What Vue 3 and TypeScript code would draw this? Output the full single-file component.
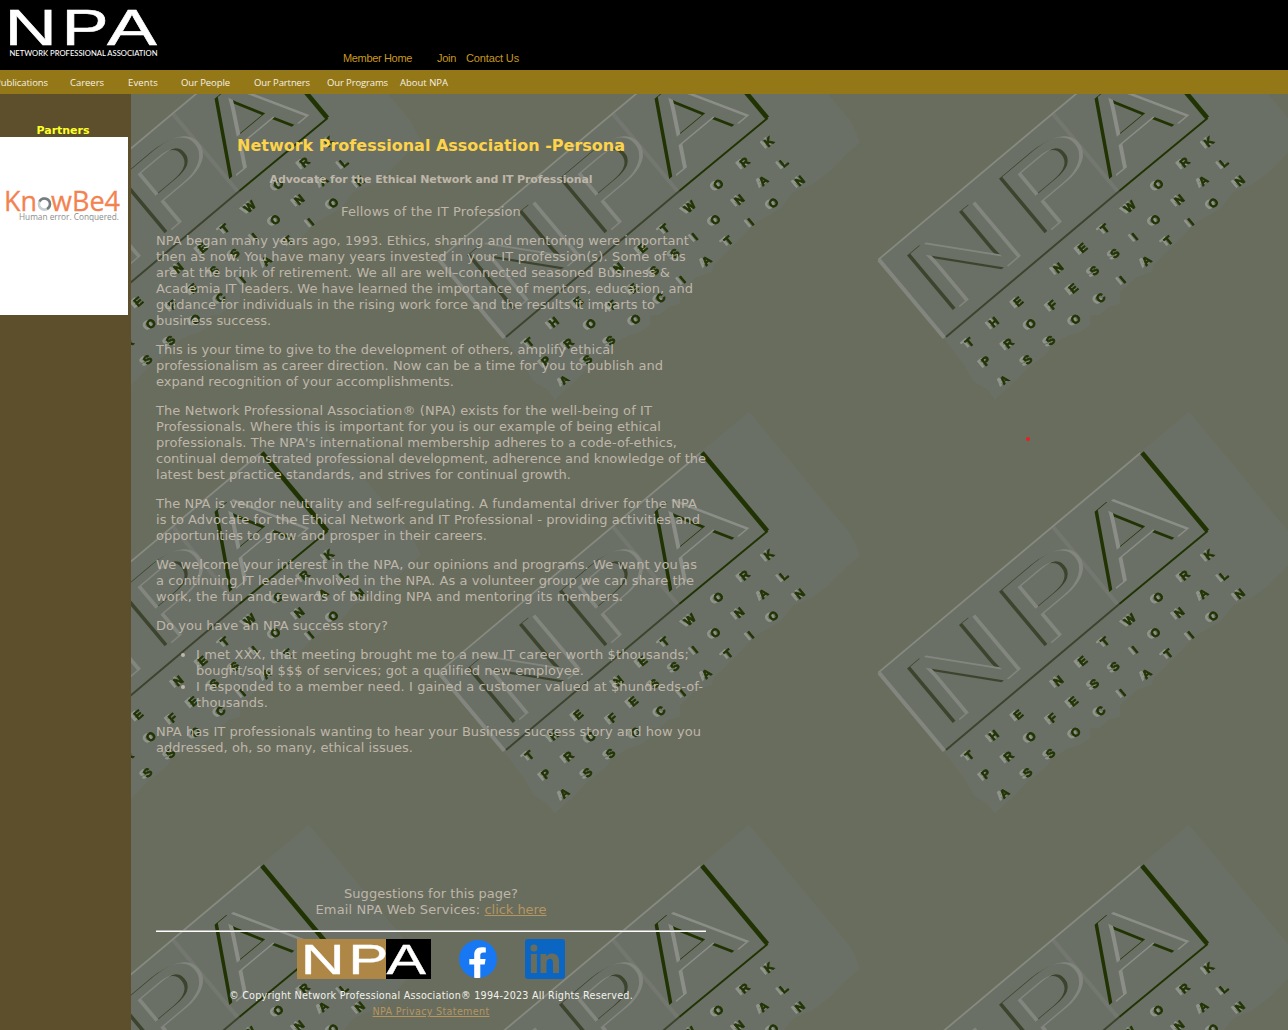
<script setup lang="ts">
import type { Directive } from 'vue'

interface Line { text: string; w: number }
interface Glyph { c: string; x: number; y: number }

// Spreads a line of text over an exact measure by adjusting its tracking.
const vFit: Directive<HTMLElement, number> = {
  mounted(el, { value }) {
    const natural = el.getBoundingClientRect().width
    const count = (el.textContent ?? '').length
    if (count > 1) el.style.letterSpacing = `${(value - natural) / count}px`
  },
}

const topLinks = [
  { text: 'Member Home', w: 69, gap: 25 },
  { text: 'Join', w: 19, gap: 10 },
  { text: 'Contact Us', w: 53, gap: 0 },
]

const nav = [
  { text: 'Publications', w: 53, gap: 22 },
  { text: 'Careers', w: 34, gap: 24 },
  { text: 'Events', w: 30, gap: 23 },
  { text: 'Our People', w: 49, gap: 24 },
  { text: 'Our Partners', w: 56, gap: 17 },
  { text: 'Our Programs', w: 61, gap: 12 },
  { text: 'About NPA', w: 48, gap: 0 },
]

const paragraphs: Line[][] = [
  [
    { text: 'NPA began many years ago, 1993. Ethics, sharing and mentoring were important', w: 533 },
    { text: 'then as now. You have many years invested in your IT profession(s). Some of us', w: 530 },
    { text: 'are at the brink of retirement. We all are well–connected seasoned Business &', w: 514 },
    { text: 'Academia IT leaders. We have learned the importance of mentors, education, and', w: 537 },
    { text: 'guidance for individuals in the rising work force and the results it imparts to', w: 499 },
    { text: 'business success.', w: 115 },
  ],
  [
    { text: 'This is your time to give to the development of others, amplify ethical', w: 458 },
    { text: 'professionalism as career direction. Now can be a time for you to publish and', w: 507 },
    { text: 'expand recognition of your accomplishments.', w: 298 },
  ],
  [
    { text: 'The Network Professional Association® (NPA) exists for the well-being of IT', w: 496 },
    { text: 'Professionals. Where this is important for you is our example of being ethical', w: 505 },
    { text: "professionals. The NPA's international membership adheres to a code-of-ethics,", w: 521 },
    { text: 'continual demonstrated professional development, adherence and knowledge of the', w: 550 },
    { text: 'latest best practice standards, and strives for continual growth.', w: 415 },
  ],
  [
    { text: 'The NPA is vendor neutrality and self-regulating. A fundamental driver for the NPA', w: 541 },
    { text: 'is to Advocate for the Ethical Network and IT Professional - providing activities and', w: 544 },
    { text: 'opportunities to grow and prosper in their careers.', w: 331 },
  ],
  [
    { text: 'We welcome your interest in the NPA, our opinions and programs. We want you as', w: 541 },
    { text: 'a continuing IT leader involved in the NPA. As a volunteer group we can share the', w: 538 },
    { text: 'work, the fun and rewards of building NPA and mentoring its members.', w: 467 },
  ],
  [{ text: 'Do you have an NPA success story?', w: 232 }],
]

const stories: Line[][] = [
  [
    { text: 'I met XXX, that meeting brought me to a new IT career worth $thousands;', w: 493 },
    { text: 'bought/sold $$$ of services; got a qualified new employee.', w: 388 },
  ],
  [
    { text: 'I responded to a member need. I gained a customer valued at $hundreds-of-', w: 507 },
    { text: 'thousands.', w: 72 },
  ],
]

const closing: Line[] = [
  { text: 'NPA has IT professionals wanting to hear your Business success story and how you', w: 545 },
  { text: 'addressed, oh, so many, ethical issues.', w: 257 },
]

// Centres of the scattered letters on the wallpaper tile.
const glyphs: Glyph[] = [
  { c: 'T', x: 293, y: 1053 }, { c: 'H', x: 367, y: 993 }, { c: 'E', x: 440, y: 931 },
  { c: 'N', x: 560, y: 830 }, { c: 'E', x: 633, y: 770 }, { c: 'T', x: 700, y: 712 },
  { c: 'W', x: 775, y: 646 }, { c: 'O', x: 860, y: 579 }, { c: 'R', x: 939, y: 513 },
  { c: 'K', x: 1012, y: 451 },
  { c: 'P', x: 343, y: 1109 }, { c: 'R', x: 411, y: 1056 }, { c: 'O', x: 478, y: 997 },
  { c: 'F', x: 543, y: 941 }, { c: 'E', x: 605, y: 891 }, { c: 'S', x: 668, y: 838 },
  { c: 'S', x: 730, y: 786 }, { c: 'I', x: 790, y: 736 }, { c: 'O', x: 851, y: 685 },
  { c: 'N', x: 923, y: 625 }, { c: 'A', x: 995, y: 568 }, { c: 'L', x: 1057, y: 514 },
  { c: 'A', x: 398, y: 1167 }, { c: 'S', x: 468, y: 1105 }, { c: 'S', x: 537, y: 1047 },
  { c: 'O', x: 612, y: 984 }, { c: 'C', x: 687, y: 920 }, { c: 'I', x: 753, y: 865 },
  { c: 'A', x: 825, y: 808 }, { c: 'T', x: 890, y: 748 }, { c: 'I', x: 958, y: 692 },
  { c: 'O', x: 1025, y: 635 }, { c: 'N', x: 1105, y: 569 },
]

const engraved = [
  { c: 'N', x: 78, left: 0.076, sx: 1.38, dark: '#3c442d', light: '#83867e' },
  { c: 'P', x: 438, left: 0.077, sx: 1.4, dark: '#3c442d', light: '#83867e' },
  { c: 'A', x: 692, left: 0, sx: 1.39, dark: '#213303', light: '#8b8e87' },
].map((e) => ({ ...e, tx: e.x - e.left * 310 * e.sx }))
</script>

<template>
  <div class="page">
    <header class="masthead">
      <svg class="brand" width="170" height="70" viewBox="0 0 170 70">
        <g fill="#fff" stroke="#fff" stroke-width=".5" font-family="Liberation Sans, sans-serif" font-size="50.5">
          <text transform="translate(4.4 45) scale(1.44 1)">N</text>
          <text transform="translate(61.5 45) scale(1.4 1)">P</text>
          <text transform="translate(107 45) scale(1.48 1)">A</text>
        </g>
        <text x="9.5" y="56" fill="#fff" font-family="Lato, sans-serif" font-weight="500" font-size="8" textLength="148" lengthAdjust="spacingAndGlyphs">NETWORK PROFESSIONAL ASSOCIATION</text>
      </svg>
      <nav class="top-links">
        <a v-for="l in topLinks" :key="l.text" :style="{ marginRight: l.gap + 'px', width: l.w + 'px' }"><span v-fit="l.w">{{ l.text }}</span></a>
      </nav>
    </header>

    <nav class="nav-bar">
      <a v-for="l in nav" :key="l.text" :style="{ marginRight: l.gap + 'px', width: l.w + 'px' }"><span v-fit="l.w">{{ l.text }}</span></a>
    </nav>

    <div class="body">
      <aside class="sidebar">
        <h2><span v-fit="53">Partners</span></h2>
        <div class="partner">
          <svg width="128" height="178" viewBox="0 0 128 178">
            <g fill="#f4824f" stroke="#f4824f" stroke-width=".3" font-family="Open Sans, sans-serif" font-weight="400" font-size="28">
              <text x="4" y="74" textLength="33" lengthAdjust="spacingAndGlyphs">Kn</text>
              <text x="51" y="74" textLength="69" lengthAdjust="spacingAndGlyphs">wBe4</text>
            </g>
            <circle cx="44.5" cy="67" r="5.600" fill="none" stroke="#c9cdd0" stroke-width="2.6" />
            <path d="M39.500 64.500A5.600 5.600 0 0 1 50 67a5.600 5.600 0 0 1-3 5" fill="none" stroke="#777c80" stroke-width="2.4" />
            <text x="19" y="82.500" fill="#8c8c8c" font-family="Open Sans, sans-serif" font-weight="400" font-size="8.6" textLength="100" lengthAdjust="spacingAndGlyphs">Human error. Conquered.</text>
          </svg>
        </div>
      </aside>

      <main class="main">
        <svg class="wallpaper" width="1157" height="936">
          <defs>
            <pattern id="tile" patternUnits="userSpaceOnUse" width="1320" height="1239" patternTransform="translate(739 311) scale(.333333)">
              <rect width="1320" height="1239" fill="#696d5e" />
              <path fill="#6a7066" d="M25 803 808 145 957 20 1262 388 1293 450 1250 485 1200 537 1145 578 1090 600 1050 650 980 690 925 745 905 765 850 820 845 840 800 855 750 900 750 935 715 945 690 968 660 970 660 1000 630 1020 590 1033 545 1060 530 1085 470 1130 435 1170 375 1225 350 1195 310 1170 290 1130 225 1043Z" />
              <path d="M550 367 742 597" stroke="#74776f" stroke-width="12" />
              <path d="M25 803 811 144" stroke="#878a80" stroke-width="5" />
              <path d="M27 803 223 1037" stroke="#83867e" stroke-width="12" />
              <path d="M228 1035 748 597" stroke="#3c442d" stroke-width="6" />
              <path d="M748 597 1013 378" stroke="#213303" stroke-width="6" />
              <path d="M816 143 1012 378" stroke="#213303" stroke-width="14" />
              <g transform="translate(225 1035) rotate(-39.9)" font-family="Liberation Sans, sans-serif" font-size="310">
                <g v-for="e in engraved" :key="e.c">
                  <text :transform="`translate(${e.tx - 11} -47) scale(${e.sx} 1)`" :fill="e.dark">{{ e.c }}</text>
                  <text :transform="`translate(${e.tx + 11} -41) scale(${e.sx} 1)`" :fill="e.light">{{ e.c }}</text>
                  <text :transform="`translate(${e.tx} -45) scale(${e.sx} 1)`" fill="#6a7066">{{ e.c }}</text>
                </g>
              </g>
              <g font-family="Liberation Sans, sans-serif" font-weight="700" font-size="35" text-anchor="middle" stroke-width="2.5">
                <g v-for="(g, i) in glyphs" :key="i">
                  <text :transform="`translate(${g.x - 6} ${g.y + 2}) rotate(-40)`" y="12" fill="#90948b" stroke="#90948b">{{ g.c }}</text>
                  <text :transform="`translate(${g.x + 5} ${g.y - 2}) rotate(-40)`" y="12" fill="#213303" stroke="#213303">{{ g.c }}</text>
                </g>
              </g>
            </pattern>
          </defs>
          <rect width="1157" height="936" fill="url(#tile)" />
          <circle cx="897" cy="345" r="2" fill="#ee1c24" />
        </svg>

        <article class="content">
          <h1><span v-fit="388">Network Professional Association -Persona</span></h1>
          <h3><span v-fit="323">Advocate for the Ethical Network and IT Professional</span></h3>
          <p class="center"><span v-fit="180">Fellows of the IT Profession</span></p>
          <p v-for="(p, i) in paragraphs" :key="i">
            <template v-for="l in p" :key="l.text"><span v-fit="l.w">{{ l.text }}</span><br /></template>
          </p>
          <ul>
            <li v-for="(s, i) in stories" :key="i">
              <template v-for="l in s" :key="l.text"><span v-fit="l.w">{{ l.text }}</span><br /></template>
            </li>
          </ul>
          <p>
            <template v-for="l in closing" :key="l.text"><span v-fit="l.w">{{ l.text }}</span><br /></template>
          </p>

          <footer>
            <div class="contact">
              <span v-fit="174">Suggestions for this page?</span><br />
              <span v-fit="169">Email NPA Web Services: </span><a v-fit="62" class="mail">click here</a>
            </div>
            <hr />
            <div class="badges">
              <svg width="134" height="40" viewBox="0 0 134 40">
                <rect width="89" height="40" fill="#ae8746" />
                <rect x="89" width="45" height="40" fill="#000" />
                <g fill="#fff" stroke="#fff" stroke-width=".4" font-family="Liberation Sans, sans-serif" font-size="42">
                  <text transform="translate(3.8 34.5) scale(1.45 1)">N</text>
                  <text transform="translate(51.3 34.5) scale(1.43 1)">P</text>
                  <text transform="translate(89.5 34.5) scale(1.41 1)">A</text>
                </g>
              </svg>
              <svg class="fb" width="40" height="40" viewBox="0 0 40 40">
                <circle cx="20" cy="20" r="19" fill="#1877f2" />
                <path fill="#fff" d="M16.200 38.700V25.500h-4.900v-5.500h4.900v-4.200c0-4.900 2.900-7.600 7.300-7.600 1.800 0 3.400.2 4.300.4v4.800h-2.500c-2.400 0-3 1.400-3 2.900V20h5.300l-.9 5.500h-4.400v13.200a19 19 0 0 1-6.100 0Z" />
              </svg>
              <svg width="40" height="40" viewBox="0 0 40 40">
                <path fill="#0a66c2" fill-rule="evenodd" d="M37 0H3a3 3 0 0 0-3 3v34a3 3 0 0 0 3 3h34a3 3 0 0 0 3-3V3a3 3 0 0 0-3-3ZM11.900 34H5.900V15h6v19ZM8.900 12.400a3.500 3.500 0 1 1 0-7 3.500 3.500 0 0 1 0 7ZM34 34h-6V23.800c0-3-1.300-4-3-4-1.800 0-3.500 1.400-3.500 4.100V34h-6V15h5.800v2.600c.6-1.200 2.600-3.200 5.700-3.200 3.400 0 7 2 7 7.900V34Z" />
              </svg>
            </div>
            <div class="legal">
              <span v-fit="404">© Copyright Network Professional Association® 1994-2023 All Rights Reserved.</span><br />
              <a v-fit="117">NPA Privacy Statement</a>
            </div>
          </footer>
        </article>
      </main>
    </div>
  </div>
</template>

<style>
body {
  margin: 0;
  overflow: hidden;
}
</style>

<style scoped>
.page {
  width: 1288px;
  height: 1030px;
  overflow: hidden;
  background: #696d5e;
  font-family: "DejaVu Sans", Verdana, sans-serif;
  font-size: 13px;
  line-height: 16px;
  color: #bfb6a9;
}
.page span,
.page a {
  white-space: pre;
}
.masthead {
  display: flex;
  height: 70px;
  background: #000;
}
.brand {
  display: block;
  flex: none;
}
.top-links {
  display: flex;
  align-items: flex-start;
  padding: 50px 0 0 173px;
  font: 11px/16px "Liberation Sans", Arial, sans-serif;
  color: #c8991f;
}
.top-links a,
.nav-bar a {
  display: block;
  flex: none;
}
.nav-bar {
  display: flex;
  align-items: center;
  height: 24px;
  box-sizing: border-box;
  padding-top: 1px;
  background: #947716;
  font: 500 9.5px/17px "Open Sans", "DejaVu Sans", sans-serif;
  color: #f6f1e6;
}
.nav-bar a:first-child {
  margin-left: -5px;
}
.body {
  display: flex;
  height: 936px;
}
.sidebar {
  width: 131px;
  flex: none;
  background: #5d4f2b;
}
.sidebar h2 {
  margin: 0;
  padding: 31px 5px 0 0;
  font-size: 11px;
  line-height: 12px;
  text-align: center;
  color: #ffff2a;
}
.partner {
  width: 128px;
  height: 178px;
  background: #fff;
}
.partner svg {
  display: block;
}
.main {
  position: relative;
  flex: 1;
}
.wallpaper {
  position: absolute;
  inset: 0;
}
.content {
  position: relative;
  width: 550px;
  padding: 42px 0 0 25px;
}
h1 {
  margin: 0 0 16px;
  font-size: 16px;
  line-height: 20px;
  text-align: center;
  color: #fdd349;
}
h3 {
  margin: 0 0 16px;
  font-size: 11px;
  line-height: 16px;
  text-align: center;
}
p {
  margin: 0 0 13px;
}
.center,
footer {
  text-align: center;
}
ul {
  margin: 0 0 13px;
  padding-left: 40px;
}
.contact {
  padding-top: 117px;
}
footer a {
  color: #b59560;
  text-decoration: underline;
}
hr {
  height: 2px;
  margin: 12px 0 7px;
  border: 0;
  background: linear-gradient(#b4b4b0 50%, #fff 50%);
}
.badges {
  display: flex;
  gap: 27px;
  padding-left: 141px;
}
.badges svg {
  display: block;
}
.legal {
  margin-top: 9px;
  font-size: 9.6px;
  line-height: 16px;
  color: #f4f2ec;
}
</style>
